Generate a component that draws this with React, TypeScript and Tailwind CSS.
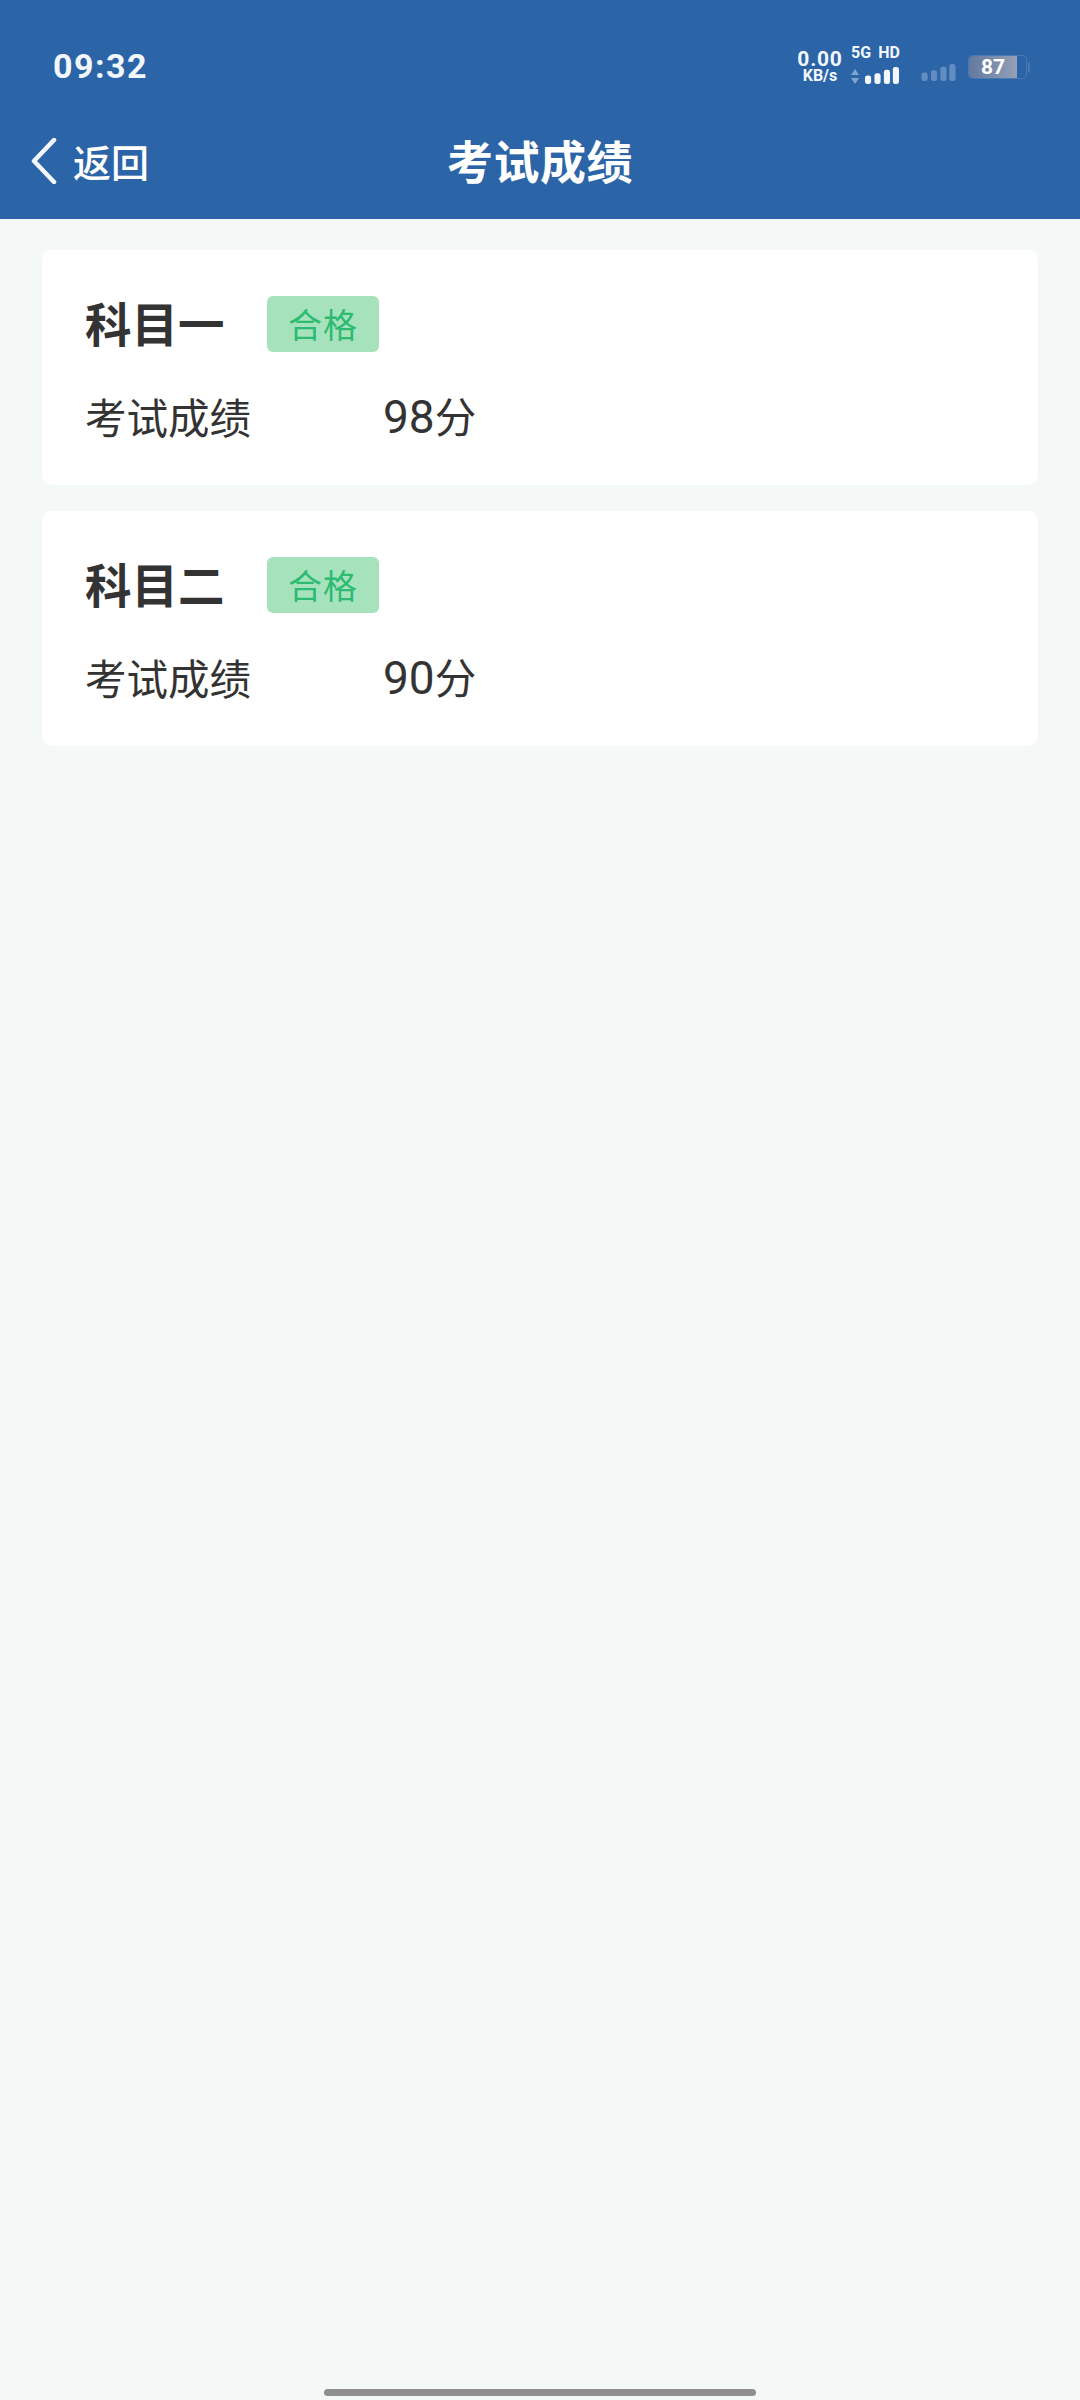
const CJK = "font-['Noto_Sans_CJK_SC','Noto_Sans',sans-serif]";

function Bars({ className, fill, opacity }: { className: string; fill: string; opacity: number }) {
  return (
    <svg className={className} viewBox="0 0 36 18" fill={fill} opacity={opacity}>
      <rect x="0" y="9" width="6.5" height="9" rx="2.5" />
      <rect x="10" y="6.5" width="6.5" height="11.5" rx="2.5" />
      <rect x="20" y="3" width="6.5" height="15" rx="2.5" />
      <rect x="29.5" y="0" width="6.5" height="18" rx="2.5" />
    </svg>
  );
}

function StatusIcons() {
  return (
    <div className="flex items-start font-['Roboto',sans-serif] font-bold text-[#f2f7fb]">
      <div className="flex w-[46px] flex-col items-center pt-[16px]">
        <span className="whitespace-nowrap text-[21px] leading-[18px] tracking-[0.8px]">0.00</span>
        <span className="whitespace-nowrap text-[16px] leading-[16px]">KB/s</span>
      </div>
      <div className="ml-[8px] flex w-[49px] flex-col pt-[10px]">
        <div className="flex justify-between text-[16px] leading-[17px]">
          <span>5G</span>
          <span>HD</span>
        </div>
        <div className="mt-[6px] flex items-end justify-between">
          <svg className="h-[15px] w-[8px]" viewBox="0 0 8 15" fill="#7fa5cf">
            <path d="M4 0 8 6H0zM0 9h8l-4 6z" />
          </svg>
          <Bars className="h-[17px] w-[36px]" fill="#f2f7fb" opacity={1} />
        </div>
      </div>
      <Bars className="ml-[21px] mt-[30px] h-[17px] w-[35px]" fill="#8fb0d6" opacity={0.55} />
      <div className="ml-[12px] mt-[21px] flex items-center">
        <div className="h-[24px] w-[59px] overflow-hidden rounded-[5px] border border-[#4a7ab4]">
          <div className="flex h-full w-[48px] items-center justify-center rounded-l-[4px] bg-gradient-to-r from-[#64799f] to-[#93a1b8] text-[21px] leading-none text-white">
            87
          </div>
        </div>
        <div className="ml-[1px] h-[10px] w-[2px] rounded-r-sm bg-[#4a7ab4]" />
      </div>
    </div>
  );
}

function ScoreCard({ subject, score }: { subject: string; score: string }) {
  return (
    <section className="h-[235px] rounded-[10px] bg-white pl-[43px]">
      <div className="flex items-center pt-[46px]">
        <h2 className="-mt-[2px] mb-[2px] w-[182px] text-[46.5px] font-bold leading-[56px] text-[#333333]">{subject}</h2>
        <span className="flex h-[56px] w-[112px] items-center justify-center rounded-[6px] bg-[#a6e3bd] text-[34px] leading-none tracking-[1px] text-[#2dba72]">
          合格
        </span>
      </div>
      <div className="mt-[35px] flex items-center text-[41.5px] leading-[56px] text-[#333333]">
        <span className="w-[298px]">考试成绩</span>
        <span>
          <span className="font-['Roboto',sans-serif] text-[46px]">{score}</span>分
        </span>
      </div>
    </section>
  );
}

export default function App() {
  return (
    <div className={`flex h-[2400px] w-[1080px] flex-col overflow-hidden bg-[#f4f8f7] ${CJK}`}>
      <header className="h-[219px] shrink-0 bg-[#2c64a8] text-white">
        <div className="flex items-start justify-between pl-[53px] pr-[50px] pt-[34px]">
          <span className="font-['Roboto',sans-serif] text-[34px] font-bold leading-[64px] tracking-[1.5px] text-[#f2f7fb]">
            09:32
          </span>
          <StatusIcons />
        </div>
        <div className="relative mt-[29px] flex h-[64px] items-center justify-center">
          <div className="absolute left-[31px] top-[11px] flex items-center">
            <svg className="h-[46px] w-[26px]" viewBox="0 0 26 46" fill="none" stroke="#f2f7fb" strokeWidth="4.5" strokeLinecap="round" strokeLinejoin="round">
              <path d="M23 2 3 23l20 21" />
            </svg>
            <span className="ml-[16px] text-[38px] font-medium leading-none">返回</span>
          </div>
          <h1 className="text-[46px] font-bold leading-none tracking-[0.5px]">考试成绩</h1>
        </div>
      </header>
      <main className="flex flex-1 flex-col gap-[26px] px-[42px] pt-[31px]">
        <ScoreCard subject="科目一" score="98" />
        <ScoreCard subject="科目二" score="90" />
      </main>
      <div className="flex h-[11px] shrink-0 justify-center">
        <div className="h-[7px] w-[432px] rounded-full bg-[#8f8f8f]" />
      </div>
    </div>
  );
}
